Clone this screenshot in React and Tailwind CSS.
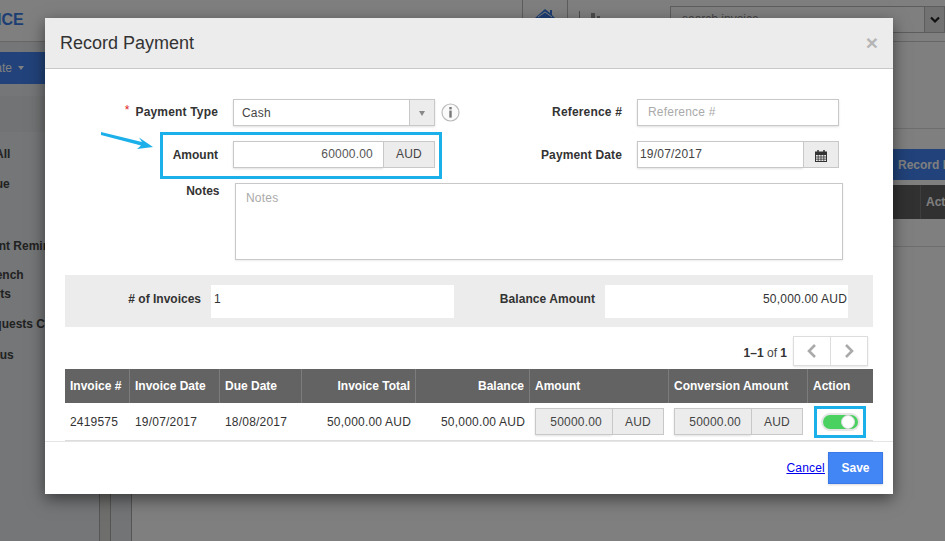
import React from "react";

const gridCols = "grid grid-cols-[65px_90px_82px_114px_114px_139px_139px_65px]";

function Th({ right, last, children }) {
  return (
    <div className={`flex h-full items-center px-[5px] font-bold tracking-normal text-white ${right ? "justify-end" : ""} ${last ? "" : "border-r border-[#7c7c7c]"}`}>
      {children}
    </div>
  );
}

function CurrencyInput() {
  return (
    <div className="ml-[5px] flex h-[27px] w-[129px] text-[#444]">
      <div className="flex w-[77px] items-center justify-end border border-r-0 border-[#c8c8c8] bg-[#ececec] pr-[10px] shadow-[0_1px_2px_rgba(0,0,0,0.12)]">50000.00</div>
      <div className="flex w-[52px] items-center justify-center border border-[#c8c8c8] bg-[#ececec]">AUD</div>
    </div>
  );
}

function NavRow({ className, children }) {
  return <div className={`whitespace-nowrap text-[12px] font-bold leading-[19px] text-[#444] ${className}`}>{children}</div>;
}

function Chevron({ flip }) {
  return (
    <svg width="12" height="16" viewBox="0 0 12 16" fill="none" stroke="#aaa" strokeWidth="2.6">
      <polyline points={flip ? "3,2 9,8 3,14" : "9,2 3,8 9,14"} />
    </svg>
  );
}

export default function App() {
  return (
    <div className="relative flex h-[541px] w-[945px] flex-col overflow-hidden bg-white font-['Liberation_Sans',Arial,sans-serif] text-[12px] text-[#333]">
      {/* page behind the dialog */}
      <header className="flex h-[42px] shrink-0 border-b border-[#ccc]">
        <div className="w-[522px] shrink-0 overflow-hidden pt-[11px]">
          <div className="ml-[-42px] whitespace-nowrap text-[16px] font-bold leading-[18px] text-[#3a7ce8]">INVOICE</div>
        </div>
        <div className="flex h-full w-[46px] shrink-0 justify-center border-x border-[#bbb] pt-[8px]">
          <svg width="20" height="18" viewBox="0 0 20 18" fill="#3a7ce8">
            <path d="M10 1 L15 5 V2 H17 V7 L20 10 H17 V18 H3 V10 H0 Z" />
            <path d="M3 9 L10 4 L17 9" fill="none" stroke="#fff" strokeWidth="1" />
          </svg>
        </div>
        <div className="w-[102px] shrink-0 pl-[11px] pt-[11px]">
          <svg width="22" height="18" viewBox="0 0 22 18" fill="#999">
            <rect x="0" y="0" width="1" height="18" />
            <rect x="12" y="2" width="4" height="16" />
            <rect x="18" y="5" width="3" height="13" />
          </svg>
        </div>
        <div className="mt-[6px] flex h-[27px] w-[275px] shrink-0 border border-[#bbb]">
          <div className="flex-1 pl-[11px] pt-[3px] text-[#888]">search invoice</div>
          <div className="flex w-[20px] items-center justify-center border-l border-[#bbb] bg-[#e4e4e4]">
            <svg width="10" height="8" viewBox="0 0 10 8" fill="none" stroke="#222" strokeWidth="2.2"><polyline points="1,1.5 5,5.5 9,1.5" /></svg>
          </div>
        </div>
      </header>

      <div className="flex min-h-0 flex-1">
        <aside className="w-[100px] shrink-0 overflow-hidden border-r border-[#aaa] bg-[#e8ecee]">
          <div className="mt-[10px] flex h-[32px] items-center bg-[#4285f4] text-white">
            <span className="ml-[-24px]">Create</span>
            <span className="ml-[6px] h-0 w-0 border-x-[3.5px] border-t-[4px] border-x-transparent border-t-white" />
          </div>
          <div className="mt-[12px] h-[36px] bg-[#e4e6e8]" />
          <nav className="flex flex-col gap-[11px] pt-[13px]">
            <NavRow className="ml-[-35px]">View All</NavRow>
            <NavRow className="ml-[-39px]">Overdue</NavRow>
            <NavRow className="ml-[-40px] mt-[32px]">Payment Reminders</NavRow>
            <NavRow className="ml-[-13px] mt-[-1px]">Bench<br />Arts</NavRow>
            <NavRow className="ml-[-21px]">Requests Completed</NavRow>
            <NavRow className="ml-[-23px] mt-[1px]">Status</NavRow>
          </nav>
        </aside>
        <div className="w-[11px] shrink-0 border-r border-[#aaa] bg-[#dddcd8]" />
        <div className="w-[21px] shrink-0 border-r border-[#aaa] bg-[#e4e8ea]" />
        <main className="min-w-0 flex-1 overflow-hidden">
          <div className="h-[87px] border-b border-[#ddd]" />
          <div className="ml-[760px] mt-[20px] flex h-[31px] w-[150px] items-center bg-[#4285f4] pl-[6px] font-bold text-white">Record Payment</div>
          <div className="mt-[5px] flex h-[34px] items-center bg-[#636363] font-bold text-white">
            <div className="ml-[788px] flex h-full items-center whitespace-nowrap border-l border-[#7c7c7c] pl-[5px]">Action</div>
          </div>
          <div className="h-[28px] border-b border-[#ddd]" />
        </main>
      </div>

      {/* backdrop */}
      <div className="absolute inset-0 bg-black/50" />

      {/* dialog */}
      <div className="absolute left-[45px] top-[18px] flex h-[476px] w-[848px] flex-col bg-white tracking-[0.2px] shadow-[0_5px_15px_rgba(0,0,0,0.5)]">
        <div className="flex h-[51px] shrink-0 items-center justify-between border-b border-[#c8c8c8] bg-[#ececec] px-[15px] tracking-normal">
          <h1 className="text-[18px] text-[#333]">Record Payment</h1>
          <span className="pb-[2px] text-[21px] font-bold leading-none text-[#b5b5b5]">×</span>
        </div>

        <div className="flex min-h-0 flex-1 flex-col px-[20px]">
          {/* top form */}
          <div className="flex pt-[30px]">
            <div className="flex w-[418px] flex-col gap-[15px]">
              <div className="flex h-[27px] items-center">
                <label className="flex w-[153px] justify-end pb-[1px] font-bold tracking-[0.17px]">
                  <span className="mr-[6px] mt-[-2px] font-normal text-[#e02020]">*</span>Payment Type
                </label>
                <div className="ml-[15px] flex h-full w-[202px] border border-[#c8c8c8] shadow-[0_1px_2px_rgba(0,0,0,0.12)]">
                  <div className="flex flex-1 items-center pl-[8px] text-[#444]">Cash</div>
                  <div className="flex w-[25px] items-center justify-center border-l border-[#c8c8c8] bg-[#ececec]">
                    <span className="mt-[1px] h-0 w-0 border-x-[3.5px] border-t-[5px] border-x-transparent border-t-[#888]" />
                  </div>
                </div>
                <svg className="ml-[6px]" width="19" height="19" viewBox="0 0 19 19">
                  <circle cx="9.5" cy="9.5" r="8.5" fill="#fafafa" stroke="#bbb" strokeWidth="1.2" />
                  <rect x="8.3" y="4" width="2.4" height="2.4" fill="#777" />
                  <rect x="8.3" y="7.6" width="2.4" height="7" fill="#777" />
                </svg>
              </div>
              <div className="relative flex h-[27px] items-center">
                <label className="w-[153px] text-right font-bold tracking-normal">Amount</label>
                <div className="ml-[15px] flex h-full w-[202px]">
                  <div className="flex flex-1 items-center justify-end border border-r-0 border-[#c8c8c8] pb-[2px] pr-[10px] text-[#555] shadow-[0_1px_2px_rgba(0,0,0,0.12)]">60000.00</div>
                  <div className="flex w-[52px] items-center justify-center border border-[#c8c8c8] bg-[#ececec] pb-[2px] text-[#444]">AUD</div>
                </div>
                <div className="absolute left-[95px] top-[-9px] h-[47px] w-[282px] border-[3px] border-[#1cb0ea]" />
                <svg className="absolute left-[36px] top-[-9px]" width="54" height="20" viewBox="0 0 54 20" fill="#1cb0ea">
                  <path d="M0 0 L41 10 L38 5.5 L52 15 L36 17 L40 13.5 L0 3 Z" />
                </svg>
              </div>
            </div>
            <div className="flex flex-1 flex-col gap-[15px]">
              <div className="flex h-[27px] items-center">
                <label className="w-[139px] pb-[1px] text-right font-bold tracking-[0.17px]">Reference #</label>
                <div className="ml-[15px] flex h-full w-[202px] items-center border border-[#c8c8c8] pb-[1px] pl-[10px] text-[#aaa] shadow-[0_1px_2px_rgba(0,0,0,0.12)]">Reference #</div>
              </div>
              <div className="flex h-[27px] items-center">
                <label className="w-[139px] text-right font-bold tracking-[0.14px]">Payment Date</label>
                <div className="ml-[15px] flex h-full w-[202px]">
                  <div className="flex-1 border border-r-0 border-[#c8c8c8] pl-[2px] pt-[3px] text-[#444] shadow-[0_1px_2px_rgba(0,0,0,0.12)]">19/07/2017</div>
                  <div className="flex w-[36px] items-center justify-center border border-[#c8c8c8] bg-[#ececec] pt-[2px]">
                    <svg width="12" height="12" viewBox="0 0 12 12" fill="none" stroke="#333" strokeWidth="1">
                      <rect x="0.5" y="2" width="11" height="9.5" />
                      <path d="M0 2.5H12V4.5H0Z" fill="#333" />
                      <path d="M0.5 7H11.5M0.5 9.2H11.5M3.2 4.5V11.5M6 4.5V11.5M8.8 4.5V11.5" strokeWidth="0.8" />
                      <path d="M3 0V2.5M9 0V2.5" strokeWidth="1.5" />
                    </svg>
                  </div>
                </div>
              </div>
            </div>
          </div>

          {/* notes */}
          <div className="mt-[15px] flex items-start">
            <label className="w-[154.5px] text-right font-bold leading-[17px] tracking-normal">Notes</label>
            <div className="ml-[15.5px] h-[77px] w-[608px] border border-[#c8c8c8] pl-[10px] pt-[5px] text-[#aaa] shadow-[0_1px_2px_rgba(0,0,0,0.08)]">Notes</div>
          </div>

          {/* summary bar */}
          <div className="mt-[15px] flex h-[52px] shrink-0 items-start bg-[#ececec] pt-[10px]">
            <label className="w-[136px] text-right font-bold leading-[28px] tracking-normal">&#35; of Invoices</label>
            <div className="ml-[10px] h-[33px] w-[243px] bg-white pl-[3px] leading-[28px]">1</div>
            <label className="w-[141px] text-right font-bold leading-[28px] tracking-[0.07px]">Balance Amount</label>
            <div className="ml-[10px] h-[33px] w-[243px] bg-white pr-[1px] text-right leading-[28px]">50,000.00 AUD</div>
          </div>

          {/* pager */}
          <div className="mt-[9px] flex h-[30px] shrink-0 items-center justify-end pr-[5px] tracking-normal">
            <span className="mt-[4px] text-[#444]"><b className="text-[#333]">1–1</b> of <b className="text-[#333]">1</b></span>
            <div className="ml-[6px] flex h-full w-[75px] border border-[#ddd] shadow-[0_1px_2px_rgba(0,0,0,0.1)]">
              <div className="flex flex-1 items-center justify-center border-r border-[#ddd]"><Chevron /></div>
              <div className="flex flex-1 items-center justify-center"><Chevron flip /></div>
            </div>
          </div>

          {/* table */}
          <div className={`${gridCols} mt-[3px] h-[34px] shrink-0 items-center bg-[#636363]`}>
            <Th>Invoice #</Th>
            <Th>Invoice Date</Th>
            <Th>Due Date</Th>
            <Th right>Invoice Total</Th>
            <Th right>Balance</Th>
            <Th>Amount</Th>
            <Th>Conversion Amount</Th>
            <Th last>Action</Th>
          </div>
          <div className={`${gridCols} h-[38px] shrink-0 items-center border-b border-[#ddd]`}>
            <div className="px-[5px]">2419575</div>
            <div className="px-[5px]">19/07/2017</div>
            <div className="px-[5px]">18/08/2017</div>
            <div className="px-[5px] text-right">50,000.00 AUD</div>
            <div className="pr-[5px] text-right">50,000.00 AUD</div>
            <CurrencyInput />
            <CurrencyInput />
            <div className="ml-[6px] flex h-[32px] w-[52px] items-center justify-center border-[3px] border-[#1cb0ea] bg-white">
              <div className="flex h-[18px] w-[39px] rounded-full bg-[#e6e6e6] p-[2px]">
                <div className="flex flex-1 items-center justify-end rounded-full bg-[#4bd160] pr-[3px]">
                  <div className="h-[14px] w-[14px] rounded-full border border-[#d8d8d8] bg-white" />
                </div>
              </div>
            </div>
          </div>
        </div>

        {/* footer */}
        <div className="flex h-[53px] shrink-0 items-center justify-end border-t border-[#e5e5e5] pr-[10px]">
          <a href="#" className="mr-[3px] text-[#0000ee] underline">Cancel</a>
          <button className="h-[32px] w-[55px] border border-[#3b78e7] bg-[#4285f4] font-bold tracking-normal text-white shadow-[0_1px_2px_rgba(0,0,0,0.15)]">Save</button>
        </div>
      </div>
    </div>
  );
}
